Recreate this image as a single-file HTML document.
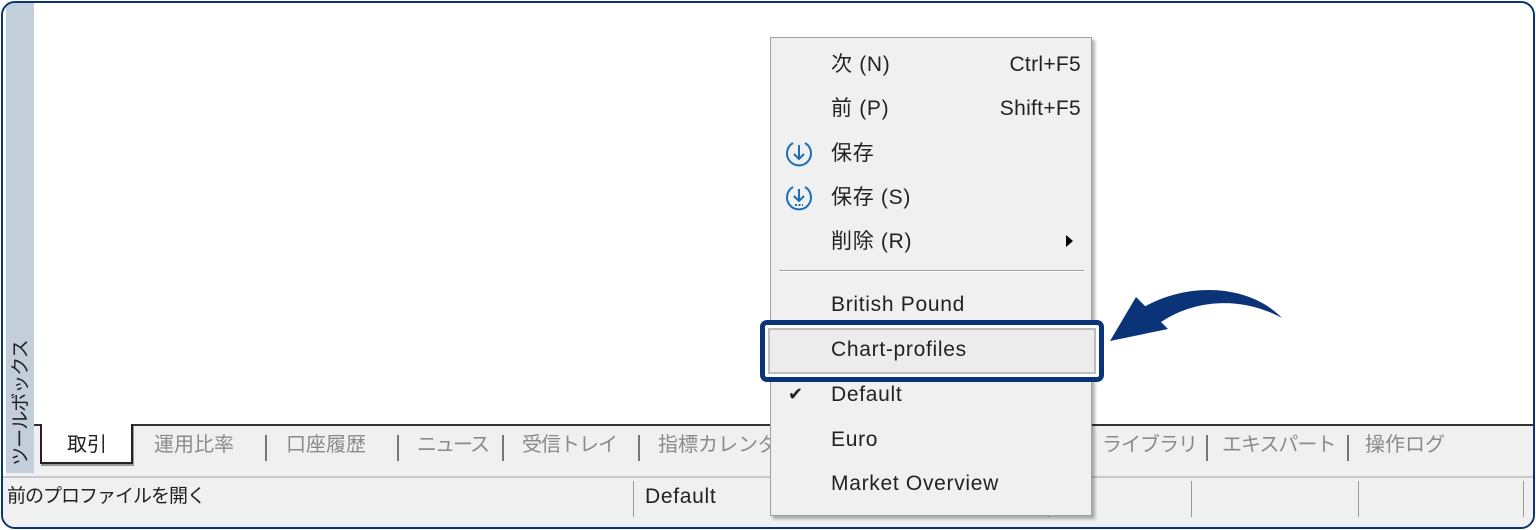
<!DOCTYPE html>
<html><head><meta charset="utf-8"><style>
body{margin:0;width:1536px;height:530px;background:#fff;overflow:hidden;font-family:"Liberation Sans","Noto Sans CJK JP",sans-serif;position:relative}
.abs{position:absolute}
.frame{border:2px solid #0b3478;border-radius:14px;box-sizing:border-box;left:1px;top:1px;width:1534px;height:528px;overflow:hidden}
.t{position:absolute;font-size:20px;color:#222;white-space:nowrap;line-height:24px}
.m{font-size:21px;letter-spacing:.7px}
.g{color:#8a8a8a;font-size:20px}
.sep{position:absolute;width:2px;height:26px;background:#777;top:432px}
.ssep{position:absolute;width:1px;height:36px;background:#999;top:478px}
</style></head><body>
<div class="abs frame">
  <div class="abs" style="left:3px;top:0;width:28px;height:470px;background:#c3cedb"></div>
  <div class="abs" style="left:3px;top:470px;width:28px;height:6px;background:#f0f0f0"></div>
  <div class="t" style="left:-44px;top:388px;transform:rotate(-90deg);font-size:19px;letter-spacing:-1px;color:#222">ツールボックス</div>
  <div class="abs" style="left:31px;top:421px;width:1500px;height:52px;background:#f0f0f0;border-top:2px solid #333"></div>
  <div class="abs" style="left:37px;top:421px;width:89px;height:38px;background:#fff;border:2px solid #222;border-top:none;box-shadow:1px 2px 0 #999"></div>
  <div class="t" style="left:64px;top:430px">取引</div>
  <div class="t g" style="left:151px;top:430px">運用比率</div><div class="sep" style="left:262px"></div>
  <div class="t g" style="left:283px;top:430px">口座履歴</div><div class="sep" style="left:394px"></div>
  <div class="t g" style="left:414px;top:430px;letter-spacing:-2px">ニュース</div><div class="sep" style="left:499px"></div>
  <div class="t g" style="left:519px;top:430px;letter-spacing:-1px">受信トレイ</div><div class="sep" style="left:635px"></div>
  <div class="t g" style="left:655px;top:430px">指標カレンダ</div>
  <div class="t g" style="left:1099px;top:430px;letter-spacing:-1px">ライブラリ</div><div class="sep" style="left:1203px"></div>
  <div class="t g" style="left:1219px;top:430px;letter-spacing:-1px">エキスパート</div><div class="sep" style="left:1344px"></div>
  <div class="t g" style="left:1362px;top:430px">操作ログ</div>
  <div class="abs" style="left:0;top:473px;width:1534px;height:2px;background:#c8c8c8"></div>
  <div class="abs" style="left:0;top:475px;width:1534px;height:50px;background:#f0f0f0"></div>
  <div class="t" style="left:4px;top:482px;font-size:19px;letter-spacing:-1px">前のプロファイルを開く</div>
  <div class="ssep" style="left:630px"></div>
  <div class="t m" style="left:642px;top:482px">Default</div>
  <div class="ssep" style="left:1046px"></div><div class="ssep" style="left:1188px"></div><div class="ssep" style="left:1355px"></div><div class="ssep" style="left:1520px"></div>
</div>
<div class="abs" style="left:770px;top:37px;width:320px;height:477px;background:#f0f0f0;border:1px solid #a0a0a0;box-shadow:3px 3px 3px rgba(0,0,0,.3)"></div>
<div class="t m" style="left:831px;top:53px">次 (N)</div><div class="t m" style="right:455px;top:53px;letter-spacing:.3px">Ctrl+F5</div>
<div class="t m" style="left:831px;top:97px">前 (P)</div><div class="t m" style="right:455px;top:97px;letter-spacing:.3px">Shift+F5</div>
<svg class="abs" style="left:785px;top:139px" width="30" height="80" viewBox="0 0 30 80"><g fill="none" stroke="#1a6fb5" stroke-width="2"><path d="M8 4 A12 12 0 1 0 20 4"/><path d="M14 6v14M9 15l5 5 5-5"/><path d="M8 48 A12 12 0 1 0 20 48"/><path d="M14 50v12M9 57l5 5 5-5"/><path d="M10 66h8" stroke-dasharray="2 1.5"/></g></svg>
<div class="t m" style="left:831px;top:142px">保存</div>
<div class="t m" style="left:831px;top:186px">保存 (S)</div>
<div class="t m" style="left:831px;top:230px">削除 (R)</div>
<svg class="abs" style="left:1066px;top:235px" width="8" height="12"><path d="M0 0L7 6L0 12Z" fill="#000"/></svg>
<div class="abs" style="left:779px;top:270px;width:305px;height:1px;background:#a0a0a0"></div>
<div class="abs" style="left:779px;top:271px;width:305px;height:1px;background:#fff"></div>
<div class="t m" style="left:831px;top:293px">British Pound</div>
<div class="abs" style="left:760px;top:320px;width:344px;height:62px;border:5px solid #0b3478;border-radius:7px;box-sizing:border-box;background:#fff"></div>
<div class="abs" style="left:768px;top:328px;width:328px;height:46px;border:2px solid #bdbdbd;box-sizing:border-box;background:#ececec"></div>
<div class="t m" style="left:831px;top:338px">Chart-profiles</div>
<div class="t" style="left:788px;top:382px;font-size:18px">✔</div>
<div class="t m" style="left:831px;top:383px">Default</div>
<div class="t m" style="left:831px;top:428px">Euro</div>
<div class="t m" style="left:831px;top:472px">Market Overview</div>
<svg class="abs" style="left:1100px;top:285px" width="190" height="70" viewBox="0 0 190 70"><path d="M182 33 C150 0 90 -4 44 22 L54 42 C90 14 140 10 182 33Z" fill="#0b3478"/><path d="M10 56 L36 12 L68 44Z" fill="#0b3478"/></svg>
</body></html>
